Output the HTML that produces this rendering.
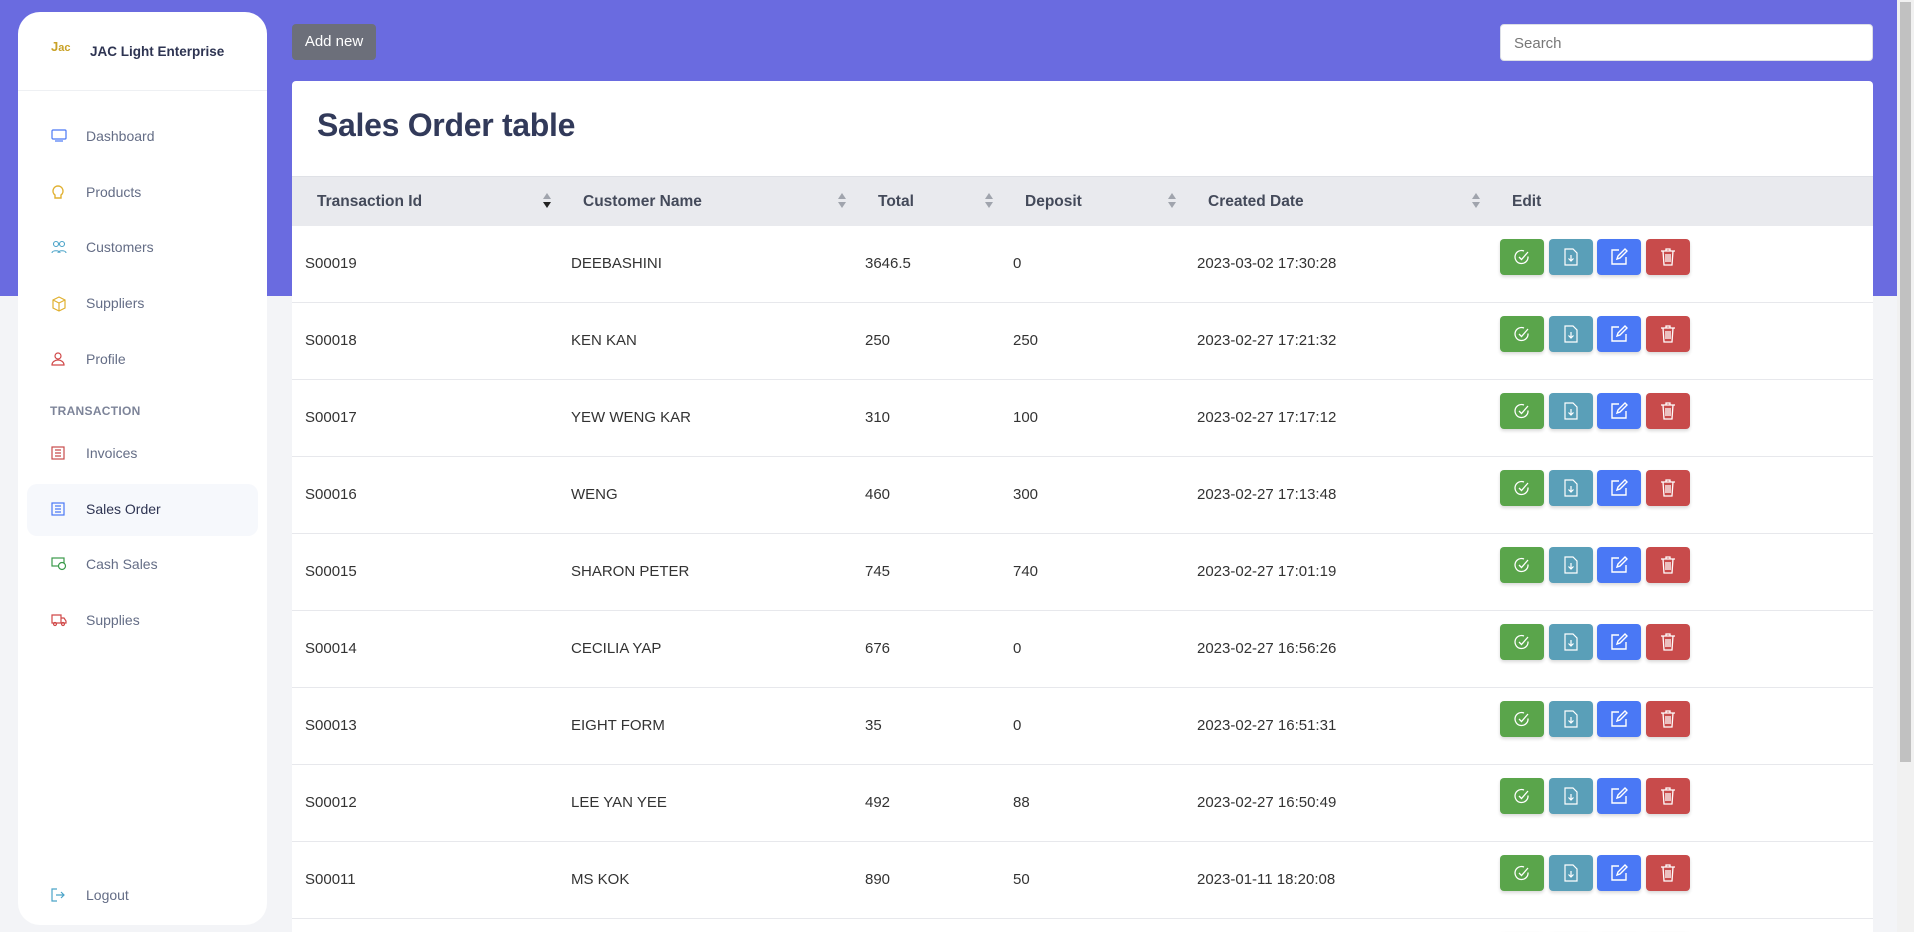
<!DOCTYPE html>
<html><head><meta charset="utf-8"><style>
*{box-sizing:border-box;margin:0;padding:0}
html,body{width:1914px;height:932px;overflow:hidden}
body{background:#f3f4f7;font-family:"Liberation Sans",sans-serif;position:relative}
.top{position:absolute;left:0;top:0;width:1897px;height:296px;background:#6a6be0}
.sb{position:absolute;left:1897px;top:0;width:17px;height:932px;background:#f1f1f1}
.sb div{position:absolute;left:3px;top:2px;width:11px;height:760px;background:#c1c1c1}
.side{position:absolute;left:18px;top:12px;width:249px;height:913px;background:#fff;border-radius:22px}
.logo{position:absolute;left:33px;top:27px;font-size:13px;color:#c9a227;font-weight:bold}
.brand{position:absolute;left:72px;top:32px;font-size:13.5px;font-weight:bold;color:#2e3452}
.div{position:absolute;left:0;top:78px;width:249px;height:1px;background:#eef0f3}
.mi{position:absolute;left:9px;width:231px;height:52px;border-radius:10px;font-size:14px;color:#646d86}
.mi svg{position:absolute;left:24px;top:18px}
.mi span{position:absolute;left:59px;top:17px}
.act{background:#f6f8fc;color:#2e3452}
.sec{position:absolute;left:32px;top:392px;font-size:12px;color:#7d8499;font-weight:bold;letter-spacing:.3px}
.add{position:absolute;left:292px;top:24px;width:84px;height:36px;background:#6c6f7a;border-radius:4px;color:#fff;font-size:15px;line-height:36px;text-align:center}
.search{position:absolute;left:1500px;top:24px;width:373px;height:37px;background:#fff;border:1px solid #dcdfe6;border-radius:4px;font-size:15px;color:#777;padding:10px 13px}
.card{position:absolute;left:292px;top:81px;width:1581px;height:851px;background:#fff;border-radius:4px 4px 0 0;overflow:hidden}
h1{position:absolute;left:25px;top:26px;font-size:32px;font-weight:600;color:#323a5a;letter-spacing:-.3px}
.hd{position:absolute;left:0;top:95px;width:1581px;height:50px;background:#e9eaee;border-top:1px solid #dfe1e6}
.hd span{position:absolute;top:16px;font-size:15.5px;font-weight:600;color:#444a5a}
.ar{position:absolute;top:16px;width:8px}
.ar:before{content:"";position:absolute;top:0;left:0;border:4px solid transparent;border-bottom:6px solid #a0a4ad;border-top:0}
.ar:after{content:"";position:absolute;top:9px;left:0;border:4px solid transparent;border-top:6px solid #a0a4ad;border-bottom:0}
.ar.d:after{border-top-color:#222}
.row{position:absolute;left:0;width:1581px;height:77px;border-bottom:1px solid #e7e8ec;font-size:15px;color:#333}
.row span{position:absolute;top:29px}
.b{position:absolute;top:13px;width:44px;height:36px;border-radius:4px;box-shadow:0 2px 3px rgba(0,0,0,.15);display:flex;align-items:center;justify-content:center}
</style></head><body>
<div class="top"></div>
<div class="sb"><div></div></div>
<div class="side">
<div class="logo">J<span style="font-size:11px">ac</span></div>
<div class="brand">JAC Light Enterprise</div>
<div class="div"></div>
<div class="mi" style="top:99px"><svg width="16" height="14" viewBox="0 0 16 14" fill="none" stroke="#4a78f5" stroke-width="1.2"><rect x="1" y="1" width="14" height="9" rx="1"/><path d="M4 12h8"/></svg><span>Dashboard</span></div>
<div class="mi" style="top:155px"><svg width="14" height="16" viewBox="0 0 14 16" fill="none" stroke="#e0b030" stroke-width="1.4"><path d="M7 1a5 5 0 0 0-3 9v3h6v-3a5 5 0 0 0-3-9z"/></svg><span>Products</span></div>
<div class="mi" style="top:210px"><svg width="16" height="14" viewBox="0 0 16 14" fill="none" stroke="#4aa3c8" stroke-width="1.1"><circle cx="5" cy="4" r="2.5"/><circle cx="11" cy="4" r="2.5"/><path d="M1 13c0-3 8-3 8 0M7 13c0-3 8-3 8 0"/></svg><span>Customers</span></div>
<div class="mi" style="top:266px"><svg width="16" height="16" viewBox="0 0 16 16" fill="none" stroke="#e0b030" stroke-width="1.2"><path d="M8 1l6 3v8l-6 3-6-3V4zM2 4l6 3 6-3M8 7v8"/></svg><span>Suppliers</span></div>
<div class="mi" style="top:322px"><svg width="14" height="14" viewBox="0 0 14 14" fill="none" stroke="#d04848" stroke-width="1.2"><circle cx="7" cy="4" r="3"/><path d="M1 13h12c0-3-3-5-6-5s-6 2-6 5z"/></svg><span>Profile</span></div>
<div class="sec">TRANSACTION</div>
<div class="mi" style="top:416px"><svg width="14" height="14" viewBox="0 0 14 14" fill="none" stroke="#c84b4b" stroke-width="1.2"><rect x="1" y="1" width="12" height="12"/><path d="M4 4h6M4 7h6M4 10h6"/></svg><span>Invoices</span></div>
<div class="mi act" style="top:472px"><svg width="14" height="14" viewBox="0 0 14 14" fill="none" stroke="#4a78f5" stroke-width="1.2"><rect x="1" y="1" width="12" height="12"/><path d="M4 4h6M4 7h6M4 10h6"/></svg><span>Sales Order</span></div>
<div class="mi" style="top:527px"><svg width="16" height="14" viewBox="0 0 16 14" fill="none" stroke="#3a9a4a" stroke-width="1.2"><rect x="1" y="1" width="12" height="8"/><circle cx="11" cy="9" r="3.5" fill="#fff"/></svg><span>Cash Sales</span></div>
<div class="mi" style="top:583px"><svg width="16" height="14" viewBox="0 0 16 14" fill="none" stroke="#d04848" stroke-width="1.2"><path d="M1 2h9v8H1zM10 5h3l2 3v2h-5"/><circle cx="4" cy="11" r="1.5"/><circle cx="12" cy="11" r="1.5"/></svg><span>Supplies</span></div>
<div class="mi" style="top:858px"><svg width="14" height="14" viewBox="0 0 14 14" fill="none" stroke="#4aa3c8" stroke-width="1.2"><path d="M6 1H1v12h5M5 7h8M10 4l3 3-3 3"/></svg><span>Logout</span></div>
</div>
<div class="add">Add new</div>
<div class="search">Search</div>
<div class="card">
<h1>Sales Order table</h1>
<div class="hd">
<span style="left:25px">Transaction Id</span><i class="ar d" style="left:251px"></i>
<span style="left:291px">Customer Name</span><i class="ar" style="left:546px"></i>
<span style="left:586px">Total</span><i class="ar" style="left:693px"></i>
<span style="left:733px">Deposit</span><i class="ar" style="left:876px"></i>
<span style="left:916px">Created Date</span><i class="ar" style="left:1180px"></i>
<span style="left:1220px">Edit</span>
</div>
<div id="rows"></div>
</div>
<script>
var d=[["S00019","DEEBASHINI","3646.5","0","2023-03-02 17:30:28"],["S00018","KEN KAN","250","250","2023-02-27 17:21:32"],["S00017","YEW WENG KAR","310","100","2023-02-27 17:17:12"],["S00016","WENG","460","300","2023-02-27 17:13:48"],["S00015","SHARON PETER","745","740","2023-02-27 17:01:19"],["S00014","CECILIA YAP","676","0","2023-02-27 16:56:26"],["S00013","EIGHT FORM","35","0","2023-02-27 16:51:31"],["S00012","LEE YAN YEE","492","88","2023-02-27 16:50:49"],["S00011","MS KOK","890","50","2023-01-11 18:20:08"]];
var xs=[13,279,573,721,905];
var ic=['<svg width="16" height="16" viewBox="0 0 16 16" fill="none" stroke="#fff" stroke-width="1.3"><path d="M14 7.5A6.5 6.5 0 1 1 10 2"/><path d="M5 8l2.5 2.5L14 3"/></svg>',
'<svg width="14" height="18" viewBox="0 0 14 18" fill="none" stroke="#fff" stroke-width="1.2"><path d="M1 1h8l4 4v12H1z"/><path d="M7 7v6M4.5 10.5L7 13l2.5-2.5"/></svg>',
'<svg width="18" height="18" viewBox="0 0 18 18" fill="none" stroke="#fff" stroke-width="1.4"><path d="M9 2H2v14h14V9"/><path d="M7 11l1-3 7-7 2 2-7 7z"/></svg>',
'<svg width="16" height="18" viewBox="0 0 16 18" fill="none" stroke="#fff" stroke-width="1.3"><path d="M1 3h14M6 3V1h4v2M3 3l1 14h8l1-14M6 6v8M8 6v8M10 6v8"/></svg>'];
var bc=["#5aa54b","#5a9fb8","#4a78f5","#c84b4b"];
var h="";
d.forEach(function(r,i){h+='<div class="row" style="top:'+(145+i*77)+'px">';r.forEach(function(c,j){h+='<span style="left:'+xs[j]+'px">'+c+'</span>'});
for(var k=0;k<4;k++)h+='<div class="b" style="left:'+(1208+k*48.5)+'px;background:'+bc[k]+'">'+ic[k]+'</div>';h+='</div>'});
h+='<div class="row" style="top:838px;height:13px;border:0;overflow:hidden">';
for(var k=0;k<4;k++)h+='<div class="b" style="left:'+(1208+k*48.5)+'px;background:'+bc[k]+';height:10px"></div>';
h+='</div>';
document.getElementById('rows').innerHTML=h;
</script>
</body></html>
